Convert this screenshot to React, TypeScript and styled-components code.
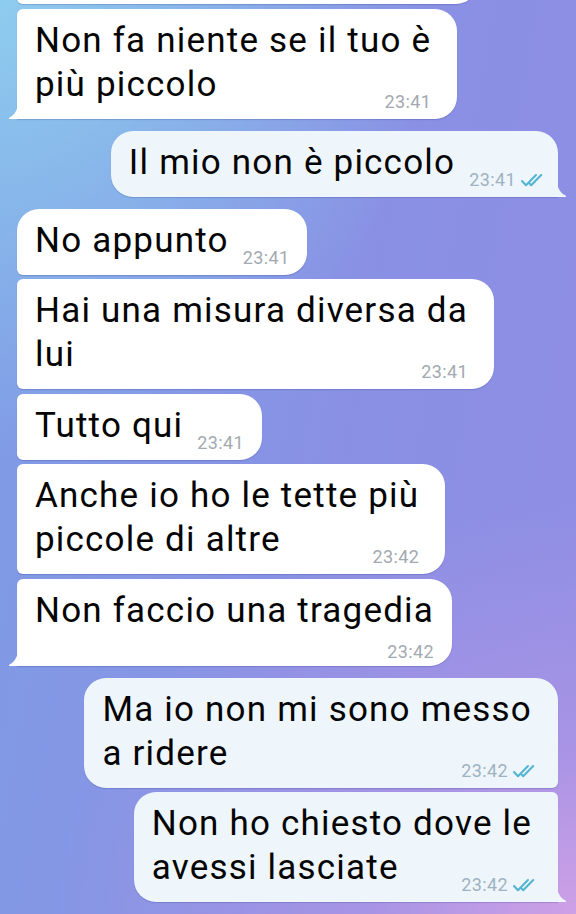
import React from "react";
import styled, { createGlobalStyle, css } from "styled-components";

const GlobalStyle = createGlobalStyle`
  html, body { margin: 0; padding: 0; }
  body { font-family: Roboto, "Noto Sans", "Liberation Sans", sans-serif; }
`;

type Pos = "first" | "middle" | "last" | "single";

interface Msg {
  lines: string[];
  time: string;
  out?: boolean;
  pos: Pos;
  below?: boolean;
  gap: number;
  blank?: boolean;
}

const messages: Msg[] = [
  { lines: [], time: "", pos: "first", gap: 0, blank: true },
  { lines: ["Non fa niente se il tuo è", "più piccolo"], time: "23:41", pos: "last", gap: 4.5 },
  { lines: ["Il mio non è piccolo"], time: "23:41", out: true, pos: "single", gap: 12 },
  { lines: ["No appunto"], time: "23:41", pos: "first", gap: 12 },
  { lines: ["Hai una misura diversa da", "lui"], time: "23:41", pos: "middle", gap: 4.5 },
  { lines: ["Tutto qui"], time: "23:41", pos: "middle", gap: 4.5 },
  { lines: ["Anche io ho le tette più", "piccole di altre"], time: "23:42", pos: "middle", gap: 4.5 },
  { lines: ["Non faccio una tragedia"], time: "23:42", pos: "last", below: true, gap: 4.5 },
  { lines: ["Ma io non mi sono messo", "a ridere"], time: "23:42", out: true, pos: "first", gap: 12 },
  { lines: ["Non ho chiesto dove le", "avessi lasciate"], time: "23:42", out: true, pos: "last", gap: 4.5 },
];

const Screen = styled.div`
  width: 576px;
  height: 914px;
  overflow: hidden;
  box-sizing: border-box;
  display: flex;
  flex-direction: column;
  justify-content: flex-end;
  padding: 0 18px 12px 17px;
  background:
    radial-gradient(90% 45% at 100% 100%, rgba(206, 160, 230, 1) 0%, rgba(190, 152, 230, 0.55) 40%, rgba(170, 145, 230, 0) 100%),
    radial-gradient(75% 50% at 0% 0%, rgba(142, 204, 238, 1) 0%, rgba(142, 204, 238, 0) 100%),
    linear-gradient(100deg, #7e9de6 0%, #8a90e4 60%, #8f8ee4 100%);
`;

const Row = styled.div<{ $out?: boolean; $gap: number }>`
  display: flex;
  flex-shrink: 0;
  justify-content: ${(p) => (p.$out ? "flex-end" : "flex-start")};
  margin-top: ${(p) => p.$gap}px;
`;

const hasTail = (pos: Pos) => pos === "last" || pos === "single";
const isTop = (pos: Pos) => pos === "first" || pos === "single";

const Bubble = styled.div<{ $out?: boolean; $pos: Pos; $multi: boolean }>`
  position: relative;
  background: ${(p) => (p.$out ? "#eef6fc" : "#ffffff")};
  color: #050505;
  font-size: 35px;
  letter-spacing: 1.2px;
  line-height: 44px;
  white-space: nowrap;
  padding: 10px ${(p) => (p.$multi ? 26 : 18)}px 12px 18px;
  box-shadow: 0 1px 1px rgba(35, 45, 120, 0.22);
  ${(p) =>
    p.$out
      ? css`
          border-radius: 22px ${isTop(p.$pos) ? 22 : 6}px ${hasTail(p.$pos) ? 0 : 6}px 22px;
        `
      : css`
          border-radius: ${isTop(p.$pos) ? 22 : 6}px 22px 22px ${hasTail(p.$pos) ? 0 : 6}px;
        `}
`;

const BlankBody = styled.div`
  width: 425px;
  height: 44px;
`;

const TailSvg = styled.svg<{ $out?: boolean }>`
  position: absolute;
  bottom: 0;
  width: 10px;
  height: 18px;
  ${(p) =>
    p.$out
      ? css`
          right: -9px;
          transform: scaleX(-1);
        `
      : css`
          left: -9px;
        `}
`;

const Line = styled.div`
  display: block;
`;

const LastRow = styled.div<{ $below?: boolean }>`
  display: flex;
  ${(p) =>
    p.$below
      ? css`
          flex-direction: column;
          align-items: stretch;
        `
      : css`
          flex-direction: row;
          align-items: flex-end;
          gap: 14px;
        `}
`;

const Meta = styled.div<{ $out?: boolean; $below?: boolean }>`
  display: flex;
  align-items: center;
  justify-content: flex-end;
  gap: 4px;
  font-size: 18px;
  letter-spacing: 0.4px;
  line-height: 20px;
  margin-left: auto;
  color: ${(p) => (p.$out ? "#9fb2bf" : "#a3a9b0")};
  margin-right: ${(p) => (p.$out ? -8 : 0)}px;
  ${(p) =>
    p.$below
      ? css`
          margin-top: 9px;
          margin-bottom: -8px;
        `
      : css`
          margin-bottom: -5px;
        `}
`;

const ChecksSvg = styled.svg`
  width: 28px;
  height: 16px;
  flex-shrink: 0;
`;

const Tail: React.FC<{ out?: boolean }> = ({ out }) => (
  <TailSvg $out={out} viewBox="0 0 10 18" aria-hidden>
    <path
      d="M10 0 C10 8 7.5 13.5 1.6 16.4 C0.5 16.9 0.8 18 1.9 18 L10 18 Z"
      fill={out ? "#eef6fc" : "#ffffff"}
    />
  </TailSvg>
);

const Checks: React.FC = () => (
  <ChecksSvg viewBox="0 0 28 16" aria-hidden>
    <g fill="none" stroke="#55b4d2" strokeWidth="2.1" strokeLinecap="round" strokeLinejoin="round">
      <path d="M2 9 L6 13.2 L16 3" />
      <path d="M9.6 11.6 L11.2 13.2 L21.2 3" />
    </g>
  </ChecksSvg>
);

const Message: React.FC<{ m: Msg }> = ({ m }) => {
  const head = m.lines.slice(0, -1);
  const last = m.lines[m.lines.length - 1];
  return (
    <Row $out={m.out} $gap={m.gap}>
      <Bubble $out={m.out} $pos={m.pos} $multi={m.lines.length > 1}>
        {m.blank ? (
          <BlankBody />
        ) : (
          <>
            {head.map((l, i) => (
              <Line key={i}>{l}</Line>
            ))}
            <LastRow $below={m.below}>
              <Line>{last}</Line>
              <Meta $out={m.out} $below={m.below}>
                <span>{m.time}</span>
                {m.out && <Checks />}
              </Meta>
            </LastRow>
          </>
        )}
        {hasTail(m.pos) && <Tail out={m.out} />}
      </Bubble>
    </Row>
  );
};

export default function App() {
  return (
    <>
      <GlobalStyle />
      <Screen>
        {messages.map((m, i) => (
          <Message key={i} m={m} />
        ))}
      </Screen>
    </>
  );
}
